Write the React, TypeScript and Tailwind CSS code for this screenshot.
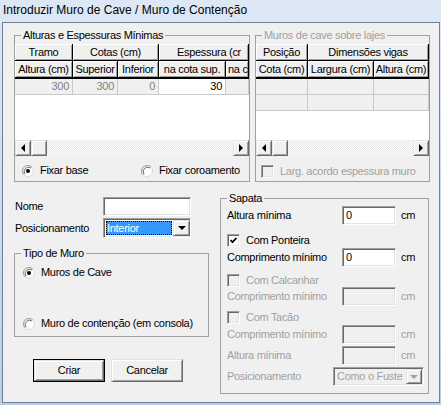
import type { ReactNode } from 'react';

const raised =
  'border border-t-[#e3e3e3] border-l-[#e3e3e3] border-r-[#696969] border-b-[#696969] shadow-[inset_1px_1px_0_#fff,inset_-1px_-1px_0_#a0a0a0] bg-[#f0f0f0]';
const sunken =
  'border border-t-[#a0a0a0] border-l-[#a0a0a0] border-r-white border-b-white shadow-[inset_1px_1px_0_#696969,inset_-1px_-1px_0_#e3e3e3]';

function Group({ legend, disabled, className = '', children }: { legend: string; disabled?: boolean; className?: string; children: ReactNode }) {
  return (
    <fieldset className={`border border-[#a0a0a0] ${className}`}>
      <legend className={`ml-[6px] px-[2px] leading-[13px] ${disabled ? 'text-[#a0a0a0]' : ''}`}>{legend}</legend>
      {children}
    </fieldset>
  );
}

function Radio({ checked, label, className = '' }: { checked?: boolean; label: string; className?: string }) {
  return (
    <div className={`flex items-center gap-[6px] h-[13px] ${className}`}>
      <svg width="12" height="12" viewBox="0 0 12 12" className="shrink-0">
        <circle cx="6" cy="6" r="5.5" fill="#fff" stroke="#d8d8d8" />
        <path d="M2.1 9.9 A5.5 5.5 0 0 1 9.9 2.1" fill="none" stroke="#a0a0a0" />
        <path d="M3 9 A4.3 4.3 0 0 1 9 3" fill="none" stroke="#696969" />
        {checked && <circle cx="6" cy="6" r="2" fill="#000" />}
      </svg>
      <span className="whitespace-nowrap">{label}</span>
    </div>
  );
}

function Check({ checked, disabled, label, className = '' }: { checked?: boolean; disabled?: boolean; label: string; className?: string }) {
  return (
    <div className={`flex items-center gap-[6px] h-[14px] ${disabled ? 'text-[#a0a0a0]' : ''} ${className}`}>
      <div className={`w-[13px] h-[13px] shrink-0 flex items-center justify-center ${sunken} ${disabled ? 'bg-[#f0f0f0]' : 'bg-white'}`}>
        {checked && (
          <svg width="9" height="9" viewBox="0 0 9 9">
            <polyline points="1.5,4 3.5,6.2 7.5,2" fill="none" stroke="#000" strokeWidth="1.8" />
          </svg>
        )}
      </div>
      <span className="whitespace-nowrap">{label}</span>
    </div>
  );
}

function Arrow({ dir, gray }: { dir: 'left' | 'right' | 'down'; gray?: boolean }) {
  const pts = dir === 'left' ? '5,0 5,8 1,4' : dir === 'right' ? '1,0 1,8 5,4' : '0,2 8,2 4,6';
  return (
    <svg width={dir === 'down' ? 8 : 6} height="8" viewBox={dir === 'down' ? '0 0 8 8' : '0 0 6 8'}>
      <polygon points={pts} fill={gray ? '#a0a0a0' : '#000'} />
    </svg>
  );
}

function HScroll() {
  return (
    <div className="flex h-[16px] shrink-0">
      <div className={`w-[16px] h-[16px] flex items-center justify-center ${raised}`}>
        <Arrow dir="left" />
      </div>
      <div className={`w-[16px] h-[16px] ${raised}`} />
      <div className="flex-1 bg-[repeating-conic-gradient(#ffffff_0_25%,#e6e6e6_0_50%)] bg-[length:2px_2px]" />
      <div className={`w-[16px] h-[16px] flex items-center justify-center ${raised}`}>
        <Arrow dir="right" />
      </div>
    </div>
  );
}

const head =
  'h-[16px] shrink-0 flex items-center justify-center bg-[#f0f0f0] border-r border-black shadow-[inset_1px_1px_0_#fff,inset_-1px_-1px_0_#a0a0a0] whitespace-nowrap overflow-hidden';
const cell = 'h-[16px] shrink-0 border-r border-b border-[#c8c8c8] flex items-center justify-end pr-[3px]';

function TextBox({ value, disabled, className = '' }: { value?: string; disabled?: boolean; className?: string }) {
  return (
    <div className={`h-[19px] flex items-center pl-[3px] ${sunken} ${disabled ? 'bg-[#f0f0f0]' : 'bg-white'} ${className}`}>
      {value}
    </div>
  );
}

export default function App() {
  return (
    <div className="w-[441px] h-[405px] flex flex-col bg-[linear-gradient(180deg,#dde8f5_0%,#cfdff0_40%,#b9cfe8_100%)] font-['Liberation_Sans',Arial,sans-serif] text-[11px] tracking-[-0.3px] text-black overflow-hidden">
      {/* title bar */}
      <div className="h-[22px] shrink-0 flex items-center px-[3px] text-[12px] tracking-normal pb-[2px]">
        Introduzir Muro de Cave / Muro de Contenção
      </div>

      {/* dialog body */}
      <div className="ml-[2px] w-[438px] h-[381px] border border-[#6f7f95] bg-[#f0f0f0] flex flex-col">
        {/* grids */}
        <div className="flex pl-[11px] pt-[6px]">
          <Group legend="Alturas e Espessuras Mínimas" className="w-[236px] h-[153px]">
            <div className="mt-[2px] h-[112px] flex flex-col overflow-hidden">
              <div className="flex border-b border-black">
                <div className={`${head} w-[58px]`}>Tramo</div>
                <div className={`${head} w-[86px]`}>Cotas (cm)</div>
                <div className={`${head} w-[90px] justify-start pl-[18px]`}>Espessura (cr</div>
              </div>
              <div className="flex border-b-2 border-black">
                <div className={`${head} w-[58px]`}>Altura (cm)</div>
                <div className={`${head} w-[45px]`}>Superior</div>
                <div className={`${head} w-[41px]`}>Inferior</div>
                <div className={`${head} w-[67px]`}>na cota sup.</div>
                <div className={`${head} w-[23px] justify-start pl-[2px]`}>na c</div>
              </div>
              <div className="flex bg-[#f0f0f0] text-[#808080]">
                <div className={`${cell} w-[58px]`}>300</div>
                <div className={`${cell} w-[45px]`}>300</div>
                <div className={`${cell} w-[41px]`}>0</div>
                <div className={`${cell} w-[67px] bg-white text-black`}>30</div>
                <div className={`${cell} w-[23px]`} />
              </div>
              <div className="flex-1 bg-white" />
              <HScroll />
            </div>
            <div className="flex mt-[8px] pl-[7px]">
              <Radio checked label="Fixar base" className="w-[119px]" />
              <Radio label="Fixar coroamento" />
            </div>
          </Group>

          <Group legend="Muros de cave sobre lajes" disabled className="ml-[5px] w-[175px] h-[153px]">
            <div className="mt-[2px] h-[112px] flex flex-col overflow-hidden">
              <div className="flex border-b border-black">
                <div className={`${head} w-[52px]`}>Posição</div>
                <div className={`${head} flex-1`}>Dimensões vigas</div>
              </div>
              <div className="flex border-b-2 border-black">
                <div className={`${head} w-[52px]`}>Cota (cm)</div>
                <div className={`${head} w-[66px]`}>Largura (cm)</div>
                <div className={`${head} flex-1`}>Altura (cm)</div>
              </div>
              {[0, 1].map(i => (
                <div key={i} className="flex bg-[#f0f0f0]">
                  <div className={`${cell} w-[52px]`} />
                  <div className={`${cell} w-[66px]`} />
                  <div className={`${cell} flex-1`} />
                </div>
              ))}
              <div className="flex-1 bg-white" />
              <HScroll />
            </div>
            <Check disabled label="Larg. acordo espessura muro" className="mt-[8px] pl-[5px]" />
          </Group>
        </div>

        {/* lower part */}
        <div className="flex items-start pl-[11px]">
          <div className="w-[195px] flex flex-col">
            <div className="flex items-center mt-[15px]">
              <span className="w-[89px] pl-[1px]">Nome</span>
              <TextBox className="w-[88px]" />
            </div>
            <div className="flex items-center mt-[2px]">
              <span className="w-[89px] pl-[1px]">Posicionamento</span>
              <div className={`w-[88px] h-[20px] bg-white flex items-center pl-[2px] ${sunken}`}>
                <div className="flex-1 h-[14px] bg-[#3399ff] text-white flex items-center pl-[1px] outline-1 outline-dotted outline-[#000] -outline-offset-1">
                  Interior
                </div>
                <div className={`w-[17px] h-[16px] ml-[1px] flex items-center justify-center ${raised}`}>
                  <Arrow dir="down" />
                </div>
              </div>
            </div>
            <Group legend="Tipo de Muro" className="mt-[9px] h-[90px]">
              <div className="pl-[8px] pt-[6px]">
                <Radio checked label="Muros de Cave" />
                <Radio label="Muro de contenção (em consola)" className="mt-[38px]" />
              </div>
            </Group>
            <div className="flex mt-[22px] pl-[19px]">
              <div className="w-[72px] h-[23px] border border-black">
                <div className={`w-full h-full flex items-center justify-center ${raised}`}>Criar</div>
              </div>
              <div className={`w-[72px] h-[23px] ml-[6px] flex items-center justify-center ${raised}`}>Cancelar</div>
            </div>
          </div>

          <Group legend="Sapata" className="ml-[11px] mt-[10px] w-[209px] h-[202px]">
            <div className="pl-[6px] flex flex-col">
              <div className="flex items-center mt-[1px]">
                <span className="w-[115px]">Altura mínima</span>
                <TextBox value="0" className="w-[54px]" />
                <span className="ml-[5px]">cm</span>
              </div>
              <Check checked label="Com Ponteira" className="mt-[8px]" />
              <div className="flex items-center mt-[1px]">
                <span className="w-[115px]">Comprimento mínimo</span>
                <TextBox value="0" className="w-[54px]" />
                <span className="ml-[5px]">cm</span>
              </div>
              <Check disabled label="Com Calcanhar" className="mt-[6px]" />
              <div className="flex items-center text-[#a0a0a0]">
                <span className="w-[115px]">Comprimento mínimo</span>
                <TextBox disabled className="w-[54px]" />
                <span className="ml-[5px]">cm</span>
              </div>
              <Check disabled label="Com Tacão" className="mt-[4px]" />
              <div className="flex items-center mt-[1px] text-[#a0a0a0]">
                <span className="w-[115px]">Comprimento mínimo</span>
                <TextBox disabled className="w-[54px]" />
                <span className="ml-[5px]">cm</span>
              </div>
              <div className="flex items-center mt-[2px] text-[#a0a0a0]">
                <span className="w-[115px]">Altura mínima</span>
                <TextBox disabled className="w-[54px]" />
                <span className="ml-[5px]">cm</span>
              </div>
              <div className="flex items-center mt-[2px] text-[#a0a0a0]">
                <span className="w-[106px]">Posicionamento</span>
                <div className={`w-[91px] h-[19px] bg-[#f0f0f0] flex items-center pl-[3px] ${sunken}`}>
                  <span className="flex-1 whitespace-nowrap overflow-hidden">Como o Fuste</span>
                  <div className={`w-[16px] h-[15px] mr-[1px] shrink-0 flex items-center justify-center ${raised}`}>
                    <Arrow dir="down" gray />
                  </div>
                </div>
              </div>
            </div>
          </Group>
        </div>
      </div>
    </div>
  );
}
